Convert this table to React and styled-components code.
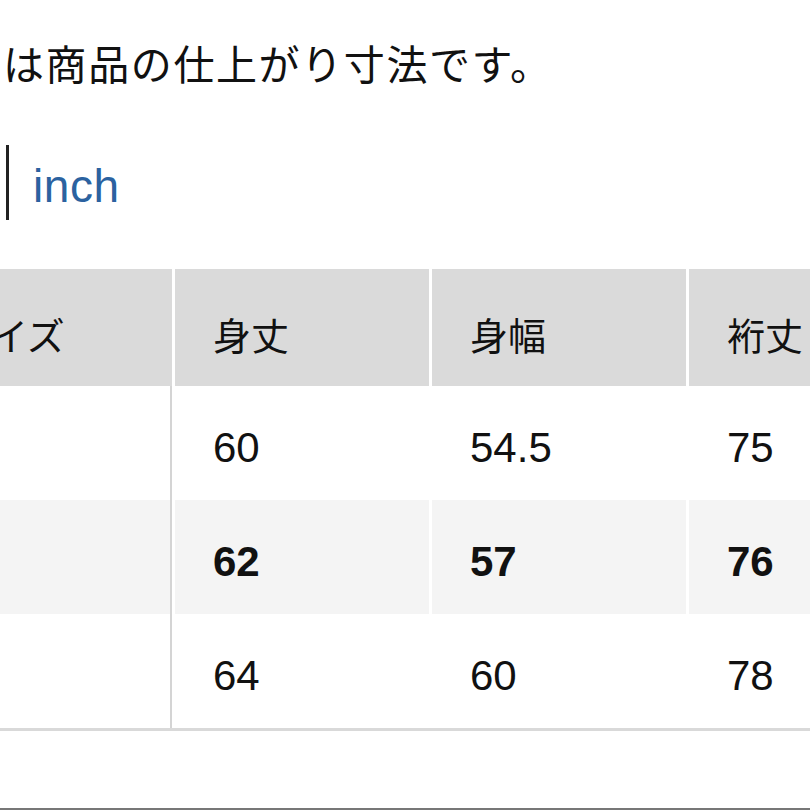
import React from 'react';
import styled, { createGlobalStyle } from 'styled-components';

const GlobalStyle = createGlobalStyle`
  html, body {
    margin: 0;
    padding: 0;
    background: #ffffff;
    overflow: hidden;
  }
  body {
    font-family: "Noto Sans CJK JP", "Liberation Sans", sans-serif;
    color: #111111;
  }
`;

const headers = ['サイズ', '身丈', '身幅', '裄丈'];

const rows = [
  { size: '', values: ['60', '54.5', '75'] },
  { size: '', values: ['62', '57', '76'], current: true },
  { size: '', values: ['64', '60', '78'] },
];

const App = () => {
  return (
    <>
      <GlobalStyle />
      <Page>
        <Caption>は商品の仕上がり寸法です。</Caption>
        <UnitRow>
          <Divider />
          <UnitLink>inch</UnitLink>
        </UnitRow>
        <SizeTable>
          {headers.map((label) => (
            <HeadCell key={label}>{label}</HeadCell>
          ))}
          {rows.map((row, i) => (
            <React.Fragment key={i}>
              <BodyCell $shade={row.current} $first>{row.size}</BodyCell>
              {row.values.map((v, j) => (
                <BodyCell key={j} $shade={row.current} $bold={row.current}>
                  {v}
                </BodyCell>
              ))}
            </React.Fragment>
          ))}
        </SizeTable>
        <Footer />
      </Page>
    </>
  );
};

const Page = styled.div`
  width: 810px;
  height: 810px;
  padding-top: 42px;
  box-sizing: border-box;
  overflow: hidden;
`;

const Caption = styled.p`
  margin: 0 0 0 3px;
  font-size: 41px;
  line-height: 41px;
  letter-spacing: 1.6px;
  white-space: nowrap;
  color: #111111;
`;

const UnitRow = styled.div`
  display: flex;
  align-items: flex-start;
  margin-top: 62px;
  padding-left: 6px;
`;

const Divider = styled.span`
  width: 3px;
  height: 75px;
  background: #222222;
`;

const UnitLink = styled.span`
  margin: 18px 0 0 24px;
  font-family: "Liberation Sans", Arial, sans-serif;
  font-size: 46px;
  line-height: 46px;
  letter-spacing: 0.6px;
  color: #2b62a0;
`;

const SizeTable = styled.div`
  display: grid;
  grid-template-columns: 258px 254px 254px 254px;
  grid-template-rows: 117px repeat(3, 114px);
  column-gap: 3px;
  margin: 49px 0 0 -86px;
  width: max-content;
  border-bottom: 3px solid #d9d9d9;
`;

const HeadCell = styled.div`
  display: flex;
  align-items: center;
  padding: 12px 0 0 38px;
  box-sizing: border-box;
  background: #dadada;
  font-size: 38px;
  white-space: nowrap;
`;

const BodyCell = styled.div`
  display: flex;
  align-items: center;
  padding: 10px 0 0 38px;
  box-sizing: border-box;
  background: ${({ $shade }) => ($shade ? '#f4f4f4' : '#ffffff')};
  border-right: ${({ $first }) => ($first ? '2px solid #d4d4d4' : 'none')};
  font-family: "Liberation Sans", Arial, sans-serif;
  font-size: 42px;
  font-weight: ${({ $bold }) => ($bold ? 700 : 400)};
  color: #111111;
`;

const Footer = styled.div`
  margin-top: 77px;
  border-top: 2px solid #777777;
`;

export default App;
